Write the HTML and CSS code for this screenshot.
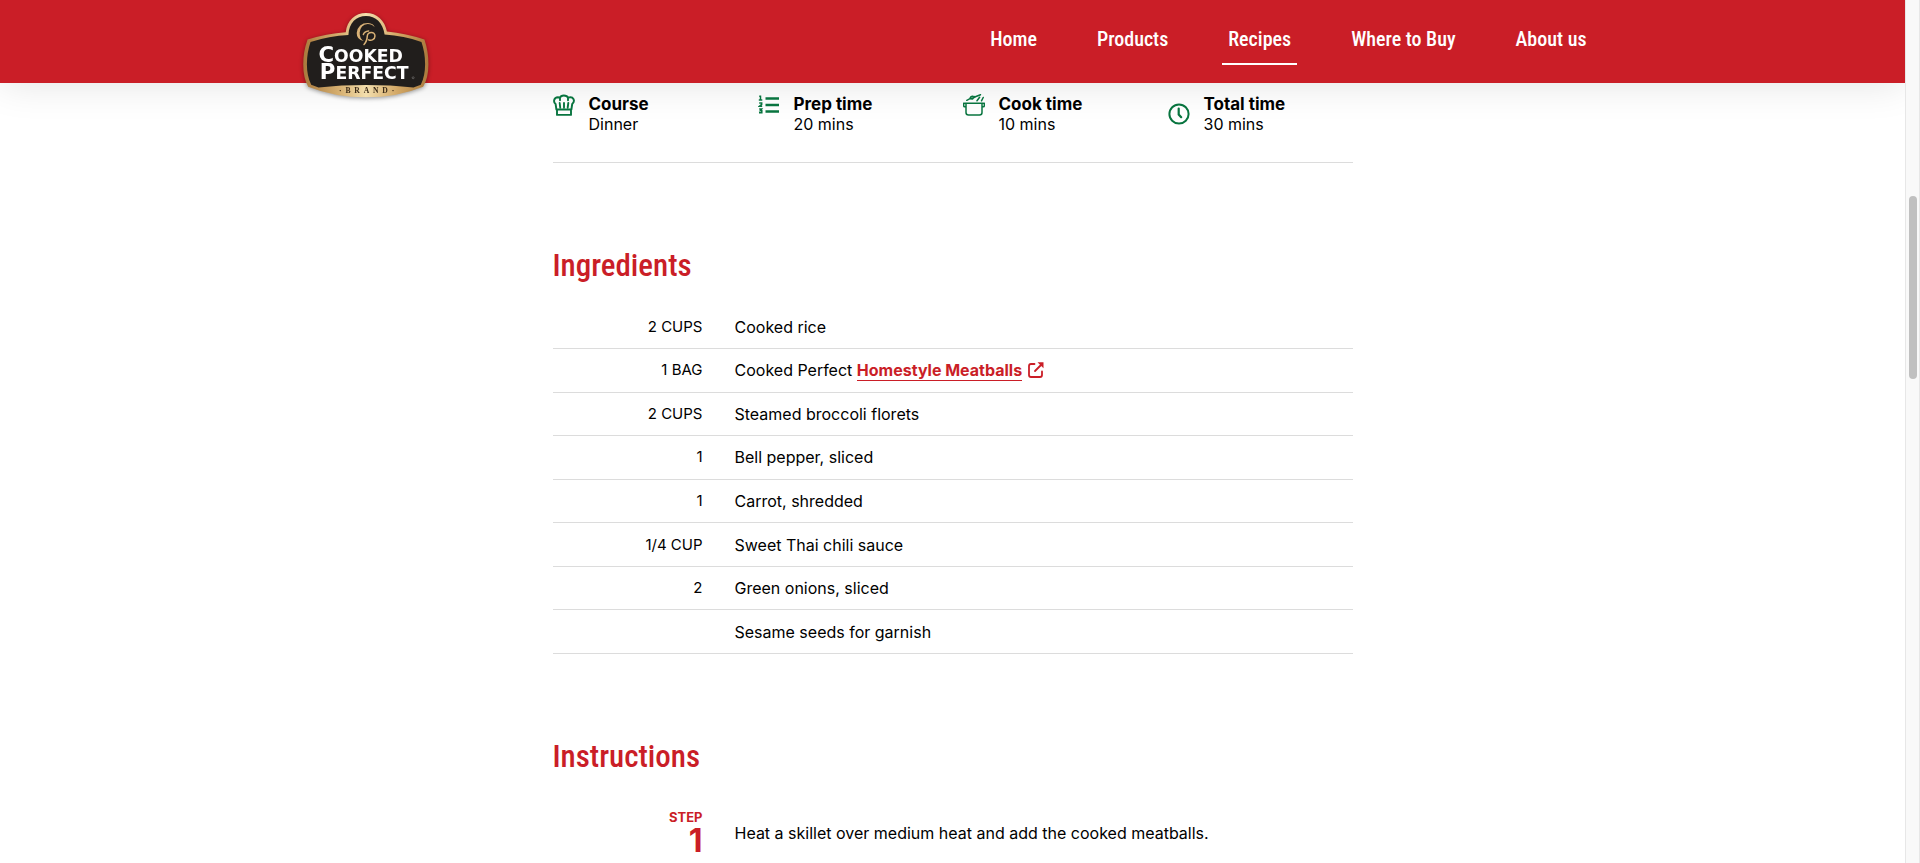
FILE: index.html
```html
<!DOCTYPE html>
<html lang="en">
<head>
<meta charset="utf-8">
<meta name="viewport" content="width=device-width, initial-scale=1">
<title>Recipe – Cooked Perfect</title>
<link rel="stylesheet" href="styles.css">
</head>
<body>
<div class="viewport">
<div class="page">
  <header class="site-header">
    <div class="header-inner">
      <a class="logo" href="#" aria-label="Cooked Perfect Brand">
        <svg class="logo-art" viewBox="36 39 378 256" aria-hidden="true">
          <defs>
            <linearGradient id="gold" x1="0" y1="0" x2="1" y2="0">
              <stop offset="0" stop-color="#a9793c"/><stop offset=".3" stop-color="#d8b273"/><stop offset=".5" stop-color="#f3dfae"/><stop offset=".75" stop-color="#d3a866"/><stop offset="1" stop-color="#a9793c"/>
            </linearGradient>
          </defs>
          <path fill="url(#gold)" d="M164 97C168 62 192 39 225 39s57 23 63 56q58 6 113 24 12 36 12 74 0 42-16 68-78 32-172 32T51 261q-15-26-15-68 0-38 13-74 57-18 115-22z"/>
          <path fill="#211e1c" d="M172 105C174 68 196 48 225 48s51 20 56 56q58 4 111 22 11 32 11 67 0 36-13 62l-22 8q-68-7-143-7t-143 7l-22-8q-13-26-13-62 0-35 11-67 56-18 114-21z"/>
          <path fill="#d9b277" d="M251 82q-3-12-20-13-30 0-34 30 0 21 21 24-13-7-12-25 2-24 24-26 13 0 21 10z"/>
          <path fill="none" stroke="#d9b277" stroke-width="4.500" stroke-linecap="round" d="M219 134q9-9 10-26c1-13 23-15 23 0 0 10-11 16-19 12M217 104q3-10 16-11"/>
          <text class="logo-name" x="82" y="186"><tspan class="logo-cap">C</tspan>OOKED</text>
          <text class="logo-name" x="86" y="237"><tspan class="logo-cap">P</tspan>ERFECT</text>
          <circle cx="367" cy="234" r="3" fill="none" stroke="#bbb"/>
          <text class="logo-brand" x="227" y="280">·&ensp;B&ensp;R&ensp;A&ensp;N&ensp;D&ensp;·</text>
        </svg>
      </a>
      <nav class="nav">
        <a href="#">Home</a>
        <a href="#">Products</a>
        <a class="current" href="#" aria-current="page">Recipes</a>
        <a href="#">Where to Buy</a>
        <a href="#">About us</a>
      </nav>
    </div>
  </header>

  <main class="recipe">
    <dl class="facts">
      <div class="fact">
        <svg class="fact-icon" viewBox="0 0 22 22" aria-hidden="true"><g fill="none" stroke="currentColor" stroke-width="1.900" stroke-linejoin="round" stroke-linecap="round"><path d="M3.400 15.500 2.600 10C.2 8.300 .5 3.300 5 3.200 6 3.200 6.500 3.400 7 3.700 7.800.7 13.800.7 15 3.700 20.500 1.600 22.600 7 19.200 10l-.8 5.500M3.800 15.500h14.400M4 16v4.900h14V16M7.200 13.500 6.700 9M11 13.500V9M14.700 13.500l.6-4.500M7 3.700v2.500M15 3.700v2.500"/></g></svg>
        <div><dt>Course</dt><dd>Dinner</dd></div>
      </div>
      <div class="fact">
        <svg class="fact-icon" viewBox="0 0 22 22" aria-hidden="true"><path fill="none" stroke="currentColor" stroke-width="2.300" d="M7.500 4.500H21M7.500 11H21M7.500 17.500H21"/><path fill="none" stroke="currentColor" stroke-width="1.500" d="M1.200 2.300h1.300V6M.8 6h3.500M1.200 8.900h2.500v1.500L1.500 12.300h2.700M1.200 15h2.500L2.300 16.800h1.500v1.900H1"/></svg>
        <div><dt>Prep time</dt><dd>20 mins</dd></div>
      </div>
      <div class="fact">
        <svg class="fact-icon" viewBox="0 0 22 22" aria-hidden="true"><g fill="none" stroke="currentColor" stroke-width="1.500" stroke-linecap="round" stroke-linejoin="round"><path d="M1.500 9.200h19M3 9.500v9q0 2.500 2.500 2.500h11q2.500 0 2.500-2.500v-9M3 12.800H1.500q-.8 0-.8-1V9.200M19 12.800h1.500q.8 0 .8-1V9.200"/><path d="M3.800 6.300 7 4.700M7 4.500q.5-2.500 3-2.300M8 5l5-2.500 4.500-1.800M9.500 5l2-2.500M14 6.800l2.600-3.500M18.500 6.800l1.700-3.300"/></g></svg>
        <div><dt>Cook time</dt><dd>10 mins</dd></div>
      </div>
      <div class="fact">
        <svg class="fact-icon fact-icon-middle" viewBox="0 0 22 22" aria-hidden="true"><circle cx="11" cy="11" r="9.600" fill="none" stroke="currentColor" stroke-width="2"/><path fill="none" stroke="currentColor" stroke-width="2.200" stroke-linecap="round" d="M10.700 5.500v6l2.500 2.700"/></svg>
        <div><dt>Total time</dt><dd>30 mins</dd></div>
      </div>
    </dl>

    <section class="block">
      <h2>Ingredients</h2>
      <table class="ingredients">
        <tbody>
          <tr><td class="amount">2 CUPS</td><td>Cooked rice</td></tr>
          <tr><td class="amount">1 BAG</td><td>Cooked Perfect <a class="product" href="#"><span>Homestyle Meatballs</span><svg class="external" viewBox="0 0 16 16" aria-hidden="true"><path fill="none" stroke="currentColor" stroke-width="1.800" stroke-linecap="round" stroke-linejoin="round" d="M6.500 2H3Q1 2 1 4v9q0 2 2 2h9q2 0 2-2V9.500M7 9l6-6"/><path fill="currentColor" d="M9.500.3h6v6z"/></svg></a></td></tr>
          <tr><td class="amount">2 CUPS</td><td>Steamed broccoli florets</td></tr>
          <tr><td class="amount">1</td><td>Bell pepper, sliced</td></tr>
          <tr><td class="amount">1</td><td>Carrot, shredded</td></tr>
          <tr><td class="amount">1/4 CUP</td><td>Sweet Thai chili sauce</td></tr>
          <tr><td class="amount">2</td><td>Green onions, sliced</td></tr>
          <tr><td class="amount"></td><td>Sesame seeds for garnish</td></tr>
        </tbody>
      </table>
    </section>

    <section class="block">
      <h2>Instructions</h2>
      <ol class="steps">
        <li class="step">
          <div class="step-label"><span class="step-word">STEP</span><span class="step-number">1</span></div>
          <p>Heat a skillet over medium heat and add the cooked meatballs.</p>
        </li>
      </ol>
    </section>
  </main>
</div>
<div class="scrollbar" aria-hidden="true"><div class="thumb"></div></div>
</div>
</body>
</html>
```
FILE: styles.css
```css
:root {
  --red: #ca1e27;
  --green: #08743f;
  --rule: #dcdcdc;
  --condensed: "Roboto Condensed", "Liberation Sans Narrow", "Roboto", sans-serif;
}
* { box-sizing: border-box; }
body {
  margin: 0;
  background: #fff;
  color: #000;
  font: 16px/20px "Inter", sans-serif;
}
h2, p, dl, dd, ol { margin: 0; padding: 0; }
.viewport {
  display: grid;
  grid-template-columns: minmax(0, 1fr) 15px;
  height: 100vh;
}
.page { overflow: hidden; }

.site-header {
  background: var(--red);
  box-shadow: 0 0 40px rgba(0, 0, 0, .12);
}
.header-inner {
  display: flex;
  justify-content: space-between;
  align-items: flex-start;
  max-width: 1280px;
  height: 83px;
  margin: 0 auto;
  padding-top: 13px;
}
.logo { margin-left: -10px; }
.logo-art {
  display: block;
  width: 126px;
  height: 85px;
  filter: drop-shadow(0 1px 2px rgba(0, 0, 0, .4));
}
.logo-name {
  fill: #fff;
  font-family: "DejaVu Sans", sans-serif;
  font-weight: 700;
  font-size: 52px;
}
.logo-cap { font-size: 64px; }
.logo-brand {
  fill: #3a2a18;
  font-family: "Liberation Serif", serif;
  font-weight: 700;
  font-size: 23px;
  text-anchor: middle;
}
.nav { display: flex; gap: 48px; }
.nav a {
  padding: 13px 6px 11px;
  border-bottom: 2px solid transparent;
  color: #fff;
  font: 500 20px/26px var(--condensed);
  text-decoration: none;
  white-space: nowrap;
}
.nav .current { border-color: #fff; }

.recipe { max-width: 800px; margin: 0 auto; }
.facts {
  display: grid;
  grid-template-columns: repeat(4, 1fr);
  gap: 20px;
  padding: 11px 0 28px;
  border-bottom: 1px solid var(--rule);
}
.fact { display: flex; gap: 14px; }
.fact-icon {
  flex: none;
  width: 22px;
  height: 22px;
  color: var(--green);
}
.fact-icon-middle { align-self: center; }
.fact dt { font-size: 17px; font-weight: 700; }

.block { padding-top: 81px; }
h2 {
  color: var(--red);
  font: 500 31px/44px var(--condensed);
}
.ingredients {
  width: 100%;
  height: 348px;
  margin-top: 18px;
  border-collapse: collapse;
}
.ingredients td {
  padding: 0;
  border-bottom: 1px solid var(--rule);
}
.ingredients .amount {
  width: 182px;
  padding-right: 32px;
  font-size: 15px;
  text-align: right;
}
.product { color: var(--red); font-weight: 700; text-decoration: none; }
.product span { border-bottom: 1px solid; }
.external { width: 16px; height: 16px; margin-left: 6px; vertical-align: -2px; }

.steps { margin-top: 30px; list-style: none; }
.step {
  display: grid;
  grid-template-columns: 150px 1fr;
  gap: 32px;
  align-items: center;
}
.step-label {
  display: grid;
  justify-items: end;
  color: var(--red);
  font-weight: 700;
}
.step-word { font-size: 13px; line-height: 16px; }
.step-number { font-size: 32px; line-height: 32px; }

.scrollbar {
  padding: 196px 2px 0 3px;
  border: solid #e7e7e7;
  border-width: 0 1px;
  background: #f9f9f9;
}
.thumb { height: 183px; border-radius: 4px; background: #c0c0c0; }
```
